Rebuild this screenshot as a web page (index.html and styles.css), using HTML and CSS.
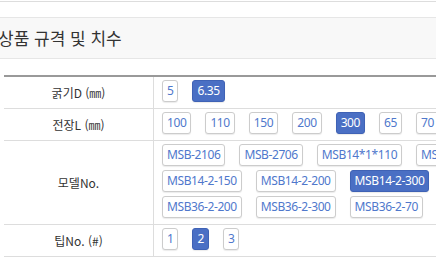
FILE: index.html
```html
<!DOCTYPE html>
<html lang="ko">
<head>
    <meta charset="UTF-8">
    <title>상품 규격 및 치수</title>
    <link rel="stylesheet" href="styles.css">
</head>
<body>
    <div class="top-rule"></div>
    <div class="section-title">
        <h3>상품 규격 및 치수</h3>
    </div>

    <table class="spec">
        <tr>
            <th>굵기D (㎜)</th>
            <td>
                <div class="opts">
                    <span class="opt">5</span>
                    <span class="opt on">6.35</span>
                </div>
            </td>
        </tr>
        <tr>
            <th>전장L (㎜)</th>
            <td>
                <div class="opts">
                    <span class="opt">100</span>
                    <span class="opt">110</span>
                    <span class="opt">150</span>
                    <span class="opt">200</span>
                    <span class="opt on">300</span>
                    <span class="opt">65</span>
                    <span class="opt">70</span>
                </div>
            </td>
        </tr>
        <tr>
            <th>모델No.</th>
            <td>
                <div class="opts">
                    <span class="opt">MSB-2106</span>
                    <span class="opt">MSB-2706</span>
                    <span class="opt">MSB14*1*110</span>
                    <span class="opt">MSB14*1*150</span>
                    <span class="opt">MSB14-2-150</span>
                    <span class="opt">MSB14-2-200</span>
                    <span class="opt on">MSB14-2-300</span>
                    <span class="opt">MSB36-2-200</span>
                    <span class="opt">MSB36-2-300</span>
                    <span class="opt">MSB36-2-70</span>
                </div>
            </td>
        </tr>
        <tr>
            <th>팁No. (#)</th>
            <td>
                <div class="opts">
                    <span class="opt">1</span>
                    <span class="opt on">2</span>
                    <span class="opt">3</span>
                </div>
            </td>
        </tr>
    </table>
</body>
</html>
```

FILE: styles.css
```css
html, body {
    overflow: hidden;
}
body {
    margin: 0;
    padding: 1px 0 0;
    font-family: "Noto Sans CJK KR", "Noto Sans", sans-serif;
    color: #333;
    background: #fff;
    width: 580px;
}
.top-rule {
    border-top: 1px solid #ddd;
    height: 15px;
}
.section-title {
    background: #f8f8f8;
    border-top: 1px solid #e6e6e6;
    border-bottom: 1px solid #e6e6e6;
    height: 40px;
    margin-bottom: 16px;
}
.section-title h3 {
    margin: 0 0 0 -2px;
    font-size: 17px;
    font-weight: normal;
    line-height: 40px;
    color: #333;
}
.spec {
    margin-left: 4px;
    width: 529px;
    border-collapse: collapse;
    border-top: 2px solid #999;
}
.spec th {
    width: 149px;
    padding: 0;
    font-size: 12px;
    font-weight: normal;
    color: #333;
    text-align: center;
    border-right: 1px solid #ddd;
    border-bottom: 1px solid #ddd;
}
.spec td {
    padding: 3px 8px 2px;
    border-bottom: 1px solid #ddd;
}
.opts {
    display: flex;
    flex-wrap: wrap;
}
.opt {
    display: inline-block;
    height: 20px;
    line-height: 20px;
    padding: 0 4px;
    margin: 0 14px 4px 0;
    border: 1px solid #ccc;
    border-radius: 3px;
    background: #fff;
    color: #4f78cc;
    font-family: "Noto Sans", sans-serif;
    font-size: 12px;
    letter-spacing: -0.4px;
    box-shadow: 0 1px 1px rgba(0,0,0,0.08);
}
.opt.on {
    background: #4a6fc4;
    border-color: #3f62b5;
    color: #fff;
}
```
